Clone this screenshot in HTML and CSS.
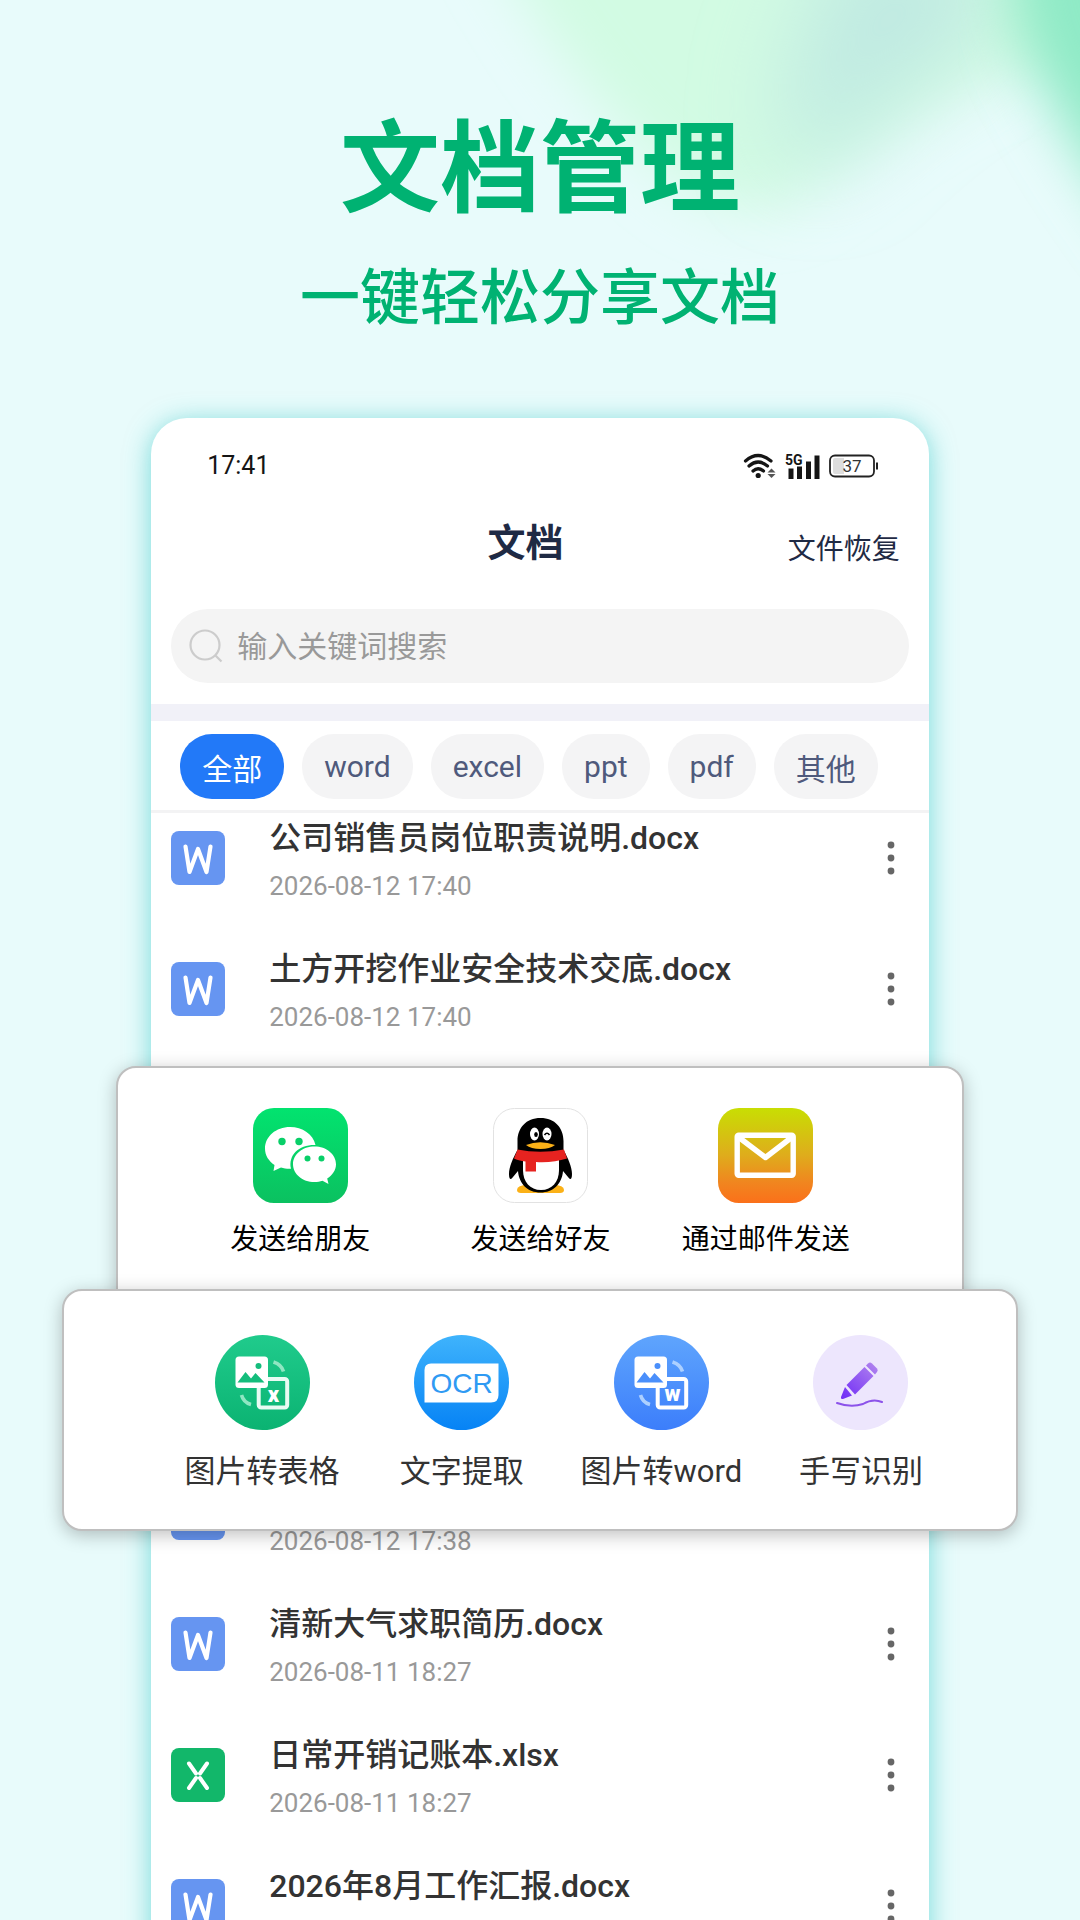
FILE: index.html
```html
<!DOCTYPE html>
<html lang="zh-CN">
<head>
    <meta charset="UTF-8">
    <meta name="viewport" content="width=device-width, initial-scale=1.0">
    <title>文档管理</title>
    <link rel="stylesheet" href="styles.css">
</head>
<body>
    <!-- shared icons -->
    <svg width="0" height="0" class="sprite" aria-hidden="true">
        <symbol id="file-word" viewBox="0 0 54 54">
            <rect width="54" height="54" rx="8" fill="#6695f1"/>
            <path d="M14.500 15.500L18.500 41l8.500-23 8.500 23 4-25.500" fill="none" stroke="#fff" stroke-width="4.200" stroke-linecap="round" stroke-linejoin="round"/>
        </symbol>
        <symbol id="file-excel" viewBox="0 0 54 54">
            <rect width="54" height="54" rx="8" fill="#12b76a"/>
            <path d="M18 15.500l7 10M36 15.500l-7 10M18 40l7-10M36 40l-7-10" fill="none" stroke="#fff" stroke-width="4" stroke-linecap="round"/>
        </symbol>
        <symbol id="dots" viewBox="0 0 8 34">
            <circle cx="4" cy="4" r="3.400"/>
            <circle cx="4" cy="17" r="3.400"/>
            <circle cx="4" cy="30" r="3.400"/>
        </symbol>
    </svg>

    <div class="poster">
        <svg class="glow" viewBox="0 0 1080 400" preserveAspectRatio="xMidYMin slice" aria-hidden="true">
            <defs>
                <filter id="soft" x="-30%" y="-30%" width="160%" height="160%">
                    <feGaussianBlur stdDeviation="28"/>
                </filter>
                <filter id="softer" x="-50%" y="-50%" width="200%" height="200%">
                    <feGaussianBlur stdDeviation="44"/>
                </filter>
            </defs>
            <path d="M480-80H1120V40L1000 75Q910 110 820 185Q760 235 690 190Q580 110 480-80Z" fill="#d2fbe3" filter="url(#soft)"/>
            <path d="M840-60L1000-60L980 40Q900 80 820 170Q760 150 800 50Z" fill="#bfe9e2" filter="url(#softer)"/>
            <path d="M1010-80H1180V290Q1085 170 1045 90Q1005 30 1010-80Z" fill="#8feac6" filter="url(#soft)"/>
        </svg>

        <header class="hero">
            <h1>文档管理</h1>
            <p>一键轻松分享文档</p>
        </header>

        <main class="phone">
            <div class="status">
                <span class="clock">17:41</span>
                <div class="status-icons">
                    <svg width="34" height="26" viewBox="0 0 34 26">
                        <g fill="none" stroke="#151515" stroke-width="3.200" stroke-linecap="round">
                            <path d="M2.500 8Q15 -3 28 8"/>
                            <path d="M6 13Q15 5 24.500 13"/>
                            <path d="M10 18Q15 13.500 20.500 18"/>
                        </g>
                        <circle cx="15.200" cy="22.500" r="2.600" fill="#151515"/>
                        <path d="M28.500 15.500l4 4h-8zM28.500 25l4-4h-8z" fill="#555"/>
                    </svg>
                    <svg class="signal" width="38" height="30" viewBox="0 0 38 30">
                        <text class="net" x="1" y="14">5G</text>
                        <path d="M4.500 17.500h5V28h-5zM13 15.500h5V28h-5zM22 10.500h5V28h-5zM30.500 4.500h5V28h-5z" fill="#151515"/>
                    </svg>
                    <svg width="50" height="26" viewBox="0 0 50 26">
                        <rect x="1" y="2.500" width="44" height="21" rx="5" fill="#fff" stroke="#222" stroke-width="1.800"/>
                        <path d="M6 5h9v16H6a2 2 0 0 1-2-2V7a2 2 0 0 1 2-2z" fill="#ddd"/>
                        <path d="M48 9.500v7" stroke="#222" stroke-width="2"/>
                        <text class="level" x="23" y="19" text-anchor="middle">37</text>
                    </svg>
                </div>
            </div>

            <div class="titlebar">
                <h2>文档</h2>
                <a href="#">文件恢复</a>
            </div>

            <label class="search">
                <svg width="34" height="34" viewBox="0 0 34 34" fill="none" stroke="#ccc" stroke-width="2.200">
                    <circle cx="16" cy="16" r="14.500"/>
                    <path d="M26.500 26.500l6 6"/>
                </svg>
                <input type="search" placeholder="输入关键词搜索" aria-label="搜索">
            </label>

            <nav class="filters">
                <button class="chip active">全部</button>
                <button class="chip">word</button>
                <button class="chip">excel</button>
                <button class="chip">ppt</button>
                <button class="chip">pdf</button>
                <button class="chip">其他</button>
            </nav>

            <ul class="files">
                <li class="file">
                    <svg class="file-icon"><use href="#file-word"/></svg>
                    <div class="file-info">
                        <h3>公司销售员岗位职责说明.docx</h3>
                        <time>2026-08-12 17:40</time>
                    </div>
                    <button class="more" aria-label="更多"><svg width="8" height="34"><use href="#dots"/></svg></button>
                </li>
                <li class="file">
                    <svg class="file-icon"><use href="#file-word"/></svg>
                    <div class="file-info">
                        <h3>土方开挖作业安全技术交底.docx</h3>
                        <time>2026-08-12 17:40</time>
                    </div>
                    <button class="more" aria-label="更多"><svg width="8" height="34"><use href="#dots"/></svg></button>
                </li>
            </ul>

            <!-- share targets and image tools, wider than the phone -->
            <section class="panel share">
                <button class="action">
                    <svg width="95" height="95" viewBox="0 0 95 95">
                        <defs>
                            <linearGradient id="wx" x2="0" y2="1"><stop stop-color="#02e36f"/><stop offset="1" stop-color="#0bc160"/></linearGradient>
                        </defs>
                        <rect width="95" height="95" rx="21" fill="url(#wx)"/>
                        <path d="M37 19C23 19 12 28.500 12 40.500c0 7 3.700 12.500 9.500 16.500L20.500 63l7.500-3.500c3 1 6.500 1.500 10 1.300C35 47 46 36.500 62.500 37 60 26 49.500 19 37 19Z" fill="#fff"/>
                        <path d="M61.500 38.500c-12 0-21.500 7.800-21.500 17.700S49.500 74 61.500 74c3 0 5.500-.4 8-1.200l6 3.200-1.300-5.500C79.500 67 83 62 83 56.200c0-9.900-9.500-17.700-21.500-17.700Z" fill="#fff"/>
                        <g fill="#08cf68">
                            <circle cx="29" cy="33.500" r="3.700"/><circle cx="46" cy="33.500" r="3.700"/>
                            <circle cx="54.500" cy="50.500" r="3"/><circle cx="68.500" cy="50.500" r="3"/>
                        </g>
                    </svg>
                    <span>发送给朋友</span>
                </button>
                <button class="action">
                    <svg width="95" height="95" viewBox="0 0 95 95">
                        <rect x=".5" y=".5" width="94" height="94" rx="21" fill="#fff" stroke="#e2e2e2"/>
                        <path d="M24 82q0-5 11-5h25q11 0 11 5 0 3-4 3H28q-4 0-4-3Z" fill="#fbb117"/>
                        <path d="M47.500 10C33 10 24.500 20 24.500 33v9C20 50 16 59 16 66c0 6 2 6 4 3l5-6c1 13 10 21.500 22.500 21.500S69 76 70 63l5 6c2 3 4 3 4-3 0-7-4-16-8.500-24v-9C70.500 20 62 10 47.500 10Z" fill="#000"/>
                        <path d="M30 50h36v12c0 12-7 20-18 20s-18-8-18-20Z" fill="#fff"/>
                        <path d="M24.500 41.500Q47 46 71 41.500l3 9Q60 55 43 54v9.500H32.500V53.500Q25 52.500 21 50.500Z" fill="#e62320"/>
                        <path d="M33 37q14-5.500 29 0-5 4-14.500 4T33 37Z" fill="#fbb117"/>
                        <ellipse cx="41.500" cy="26" rx="4.500" ry="6.500" fill="#fff"/>
                        <ellipse cx="54" cy="26" rx="4.500" ry="6.500" fill="#fff"/>
                        <ellipse cx="43" cy="26.500" rx="1.800" ry="2.600"/>
                        <path d="M51.500 27q2.500-3.500 5 0" fill="none" stroke="#000" stroke-width="1.600"/>
                    </svg>
                    <span>发送给好友</span>
                </button>
                <button class="action">
                    <svg width="95" height="95" viewBox="0 0 95 95">
                        <defs>
                            <linearGradient id="mail" x2="0" y2="1"><stop stop-color="#c8de03"/><stop offset=".5" stop-color="#dfac1c"/><stop offset=".78" stop-color="#f0861f"/><stop offset="1" stop-color="#fb701a"/></linearGradient>
                        </defs>
                        <rect width="95" height="95" rx="21" fill="url(#mail)"/>
                        <g fill="none" stroke="#fff" stroke-width="5.400" stroke-linejoin="round" stroke-linecap="round">
                            <rect x="19.200" y="27.200" width="56" height="40" rx="1.500"/>
                            <path d="M21 29.500l26.500 20 26-20"/>
                        </g>
                    </svg>
                    <span>通过邮件发送</span>
                </button>
            </section>

            <section class="panel tools">
                <button class="action">
                    <svg width="95" height="95" viewBox="0 0 95 95">
                        <defs>
                            <linearGradient id="green" x2="0" y2="1"><stop stop-color="#20cb8c"/><stop offset="1" stop-color="#0bb372"/></linearGradient>
                        </defs>
                        <circle cx="47.500" cy="47.500" r="47.500" fill="url(#green)"/>
                        <rect x="43.700" y="44" width="28.500" height="28.500" rx="2.500" fill="none" stroke="#e9fbf3" stroke-width="4"/>
                        <rect x="20.500" y="21.500" width="32.500" height="31.500" rx="3.500" fill="#fff"/>
                        <path d="M22.500 47.500l8-10.500 5.500 6.500 4.500-5.500 9 9.500Z" fill="#14bd7c"/>
                        <circle cx="43.500" cy="31" r="3" fill="#14bd7c"/>
                        <path d="M58.500 27q8 2.500 10 9.500M26.500 60q2 7.500 9.500 9.500" fill="none" stroke="#8fe6c2" stroke-width="3.600"/>
                        <text class="badge" x="58.500" y="67" text-anchor="middle">x</text>
                    </svg>
                    <span>图片转表格</span>
                </button>
                <button class="action">
                    <svg width="95" height="95" viewBox="0 0 95 95">
                        <defs>
                            <linearGradient id="blue" x2="0" y2="1"><stop stop-color="#3fb3fc"/><stop offset="1" stop-color="#0683f5"/></linearGradient>
                        </defs>
                        <circle cx="47.500" cy="47.500" r="47.500" fill="url(#blue)"/>
                        <path d="M17 28.500H84.500V60q0 7.500-7.500 7.500H10.500V35q0-6.500 6.500-6.500Z" fill="#fff"/>
                        <text class="ocr" x="47.500" y="58" text-anchor="middle">OCR</text>
                    </svg>
                    <span>文字提取</span>
                </button>
                <button class="action">
                    <svg width="95" height="95" viewBox="0 0 95 95">
                        <defs>
                            <linearGradient id="indigo" x2="0" y2="1"><stop stop-color="#5fa5fd"/><stop offset="1" stop-color="#3c7efb"/></linearGradient>
                        </defs>
                        <circle cx="47.500" cy="47.500" r="47.500" fill="url(#indigo)"/>
                        <rect x="43.700" y="44" width="28.500" height="28.500" rx="2.500" fill="none" stroke="#fff" stroke-width="4"/>
                        <rect x="20.500" y="21.500" width="32.500" height="31.500" rx="3.500" fill="#fff"/>
                        <path d="M22.500 47.500l8-10.500 5.500 6.500 4.500-5.500 9 9.500Z" fill="#4a8ffb"/>
                        <circle cx="43.500" cy="31" r="3" fill="#4a8ffb"/>
                        <path d="M58.500 27q8 2.500 10 9.500M26.500 60q2 7.500 9.500 9.500" fill="none" stroke="#acd0ff" stroke-width="3.600"/>
                        <text class="badge" x="58.500" y="66" text-anchor="middle">w</text>
                    </svg>
                    <span>图片转word</span>
                </button>
                <button class="action">
                    <svg width="95" height="95" viewBox="0 0 95 95">
                        <defs>
                            <linearGradient id="pen" gradientUnits="userSpaceOnUse" x1="62" y1="28" x2="32" y2="62"><stop stop-color="#b083ee"/><stop offset="1" stop-color="#7431f6"/></linearGradient>
                        </defs>
                        <circle cx="47.500" cy="47.500" r="47.500" fill="#ede6fd"/>
                        <g fill="url(#pen)">
                            <path d="M32 52L28 62q-.8 2.500 2 2l9-3.500Z"/>
                            <path d="M33.500 50L51.500 32l9 9L42 59.500Z"/>
                            <path d="M53 30.500l2-2q2-2 4 0l5 5q1.500 1.500 0 3.500l-2 2.500Z"/>
                        </g>
                        <path d="M24 68q14 5 26 1 10-6 19-2" fill="none" stroke="#8c52ea" stroke-width="2" stroke-linecap="round"/>
                    </svg>
                    <span>手写识别</span>
                </button>
            </section>

            <ul class="files rest">
                <li class="file">
                    <svg class="file-icon"><use href="#file-word"/></svg>
                    <div class="file-info">
                        <time>2026-08-12 17:38</time>
                    </div>
                </li>
                <li class="file">
                    <svg class="file-icon"><use href="#file-word"/></svg>
                    <div class="file-info">
                        <h3>清新大气求职简历.docx</h3>
                        <time>2026-08-11 18:27</time>
                    </div>
                    <button class="more" aria-label="更多"><svg width="8" height="34"><use href="#dots"/></svg></button>
                </li>
                <li class="file">
                    <svg class="file-icon"><use href="#file-excel"/></svg>
                    <div class="file-info">
                        <h3>日常开销记账本.xlsx</h3>
                        <time>2026-08-11 18:27</time>
                    </div>
                    <button class="more" aria-label="更多"><svg width="8" height="34"><use href="#dots"/></svg></button>
                </li>
                <li class="file">
                    <svg class="file-icon"><use href="#file-word"/></svg>
                    <div class="file-info">
                        <h3>2026年8月工作汇报.docx</h3>
                    </div>
                    <button class="more" aria-label="更多"><svg width="8" height="34"><use href="#dots"/></svg></button>
                </li>
            </ul>
        </main>
    </div>
</body>
</html>
```

FILE: styles.css
```css
* {
    box-sizing: border-box;
    margin: 0;
    padding: 0;
}
body {
    font-family: Roboto, "Noto Sans CJK SC", sans-serif;
    color: #333;
    background-color: #e8fbfb;
}
button {
    border: none;
    background: none;
    font: inherit;
    color: inherit;
    cursor: pointer;
}
ul {
    list-style: none;
}
.sprite {
    position: absolute;
}
.poster {
    position: relative;
    height: 100vh;
    overflow: hidden;
}
.glow {
    position: absolute;
    top: 0;
    left: 0;
    width: 100%;
}

/* headline */
.hero {
    position: relative;
    padding-top: 89px;
    height: 418px;
    text-align: center;
    color: #00b272;
    font-family: "Noto Sans CJK SC", sans-serif;
}
.hero h1 {
    font-size: 100px;
    line-height: 144px;
    font-weight: 700;
}
.hero p {
    margin-top: 20px;
    font-size: 60px;
    line-height: 80px;
    font-weight: 500;
}

/* phone */
.phone {
    position: relative;
    margin: 0 14%;
    background-color: #fff;
    border-radius: 36px 36px 0 0;
    box-shadow: 0 4px 26px rgba(40, 195, 195, 0.6);
}
.status {
    display: flex;
    justify-content: space-between;
    align-items: center;
    height: 95px;
    padding: 0 50px 0 56px;
}
.clock {
    font-size: 25px;
    color: #151515;
}
.status-icons {
    display: flex;
    align-items: center;
    gap: 7px;
}
.net {
    font: 700 14px Roboto, sans-serif;
    fill: #151515;
}
.level {
    font: 400 17px Roboto, sans-serif;
    fill: #333;
}
.titlebar {
    display: grid;
    grid-template-columns: 1fr auto 1fr;
    align-items: center;
    height: 60px;
    padding-right: 29px;
    color: #1f2a44;
}
.titlebar h2 {
    grid-column: 2;
    font-size: 38px;
    line-height: 56px;
}
.titlebar a {
    justify-self: end;
    padding-top: 8px;
    font-size: 28px;
    color: inherit;
    text-decoration: none;
}
.search {
    display: flex;
    align-items: center;
    gap: 14px;
    height: 74px;
    margin: 36px 20px 21px;
    padding: 0 18px;
    border-radius: 37px;
    background-color: #f4f4f4;
}
.search input {
    flex: 1;
    border: none;
    outline: none;
    background: none;
    font: inherit;
    font-size: 30px;
    color: #333;
}
.search input::placeholder {
    color: #999;
}
.filters {
    position: relative;
    display: flex;
    gap: 18px;
    padding: 13px 29px 11px;
    border-top: 17px solid #f1f1f8;
    border-bottom: 3px solid #f3f3f4;
}
.chip {
    height: 65px;
    padding: 0 22px;
    border-radius: 32px;
    background-color: #f4f4f5;
    color: #4f5a7c;
    font-size: 30px;
}
.chip.active {
    background-color: #2279f8;
    color: #fff;
}

/* file list */
.files {
    margin-top: -21px;
}
.file {
    display: flex;
    align-items: center;
    height: 131px;
    padding: 0 20px;
}
.file-icon {
    width: 54px;
    height: 54px;
}
.file-info {
    display: flex;
    flex-direction: column;
    flex: 1;
    height: 88px;
    margin-left: 44px;
}
.file-info h3 {
    font-size: 32px;
    line-height: 48px;
    font-weight: 500;
}
.file-info time {
    margin-top: auto;
    font-size: 26px;
    line-height: 32px;
    color: #999;
}
.more {
    display: flex;
    align-items: center;
    justify-content: center;
    width: 36px;
    height: 54px;
    fill: #666;
}

/* panels */
.panel {
    position: relative;
    display: grid;
    background-color: #fff;
    border: 2px solid #bfbfbf;
    border-radius: 20px;
    box-shadow: 0 4px 18px rgba(0, 0, 0, 0.25);
}
.share {
    grid-template-columns: 8fr 8fr 7fr;
    height: 243px;
    margin: 12px -35px 0;
    padding: 40px 91px 0 62px;
    color: #000;
    font-size: 28px;
}
.tools {
    grid-template-columns: repeat(4, 1fr);
    height: 242px;
    margin: -20px -89px 0;
    padding: 44px 55px 0 98px;
    font-size: 31px;
}
.action {
    display: flex;
    flex-direction: column;
    align-items: center;
    gap: 14px;
    line-height: 46px;
    white-space: nowrap;
}
.tools .action {
    gap: 19px;
}
.badge {
    font: 900 22px Roboto, sans-serif;
    fill: #fff;
}
.ocr {
    font: 400 28px "Liberation Sans", sans-serif;
    fill: #2f9af3;
}
.rest {
    margin-top: -84px;
}
```
